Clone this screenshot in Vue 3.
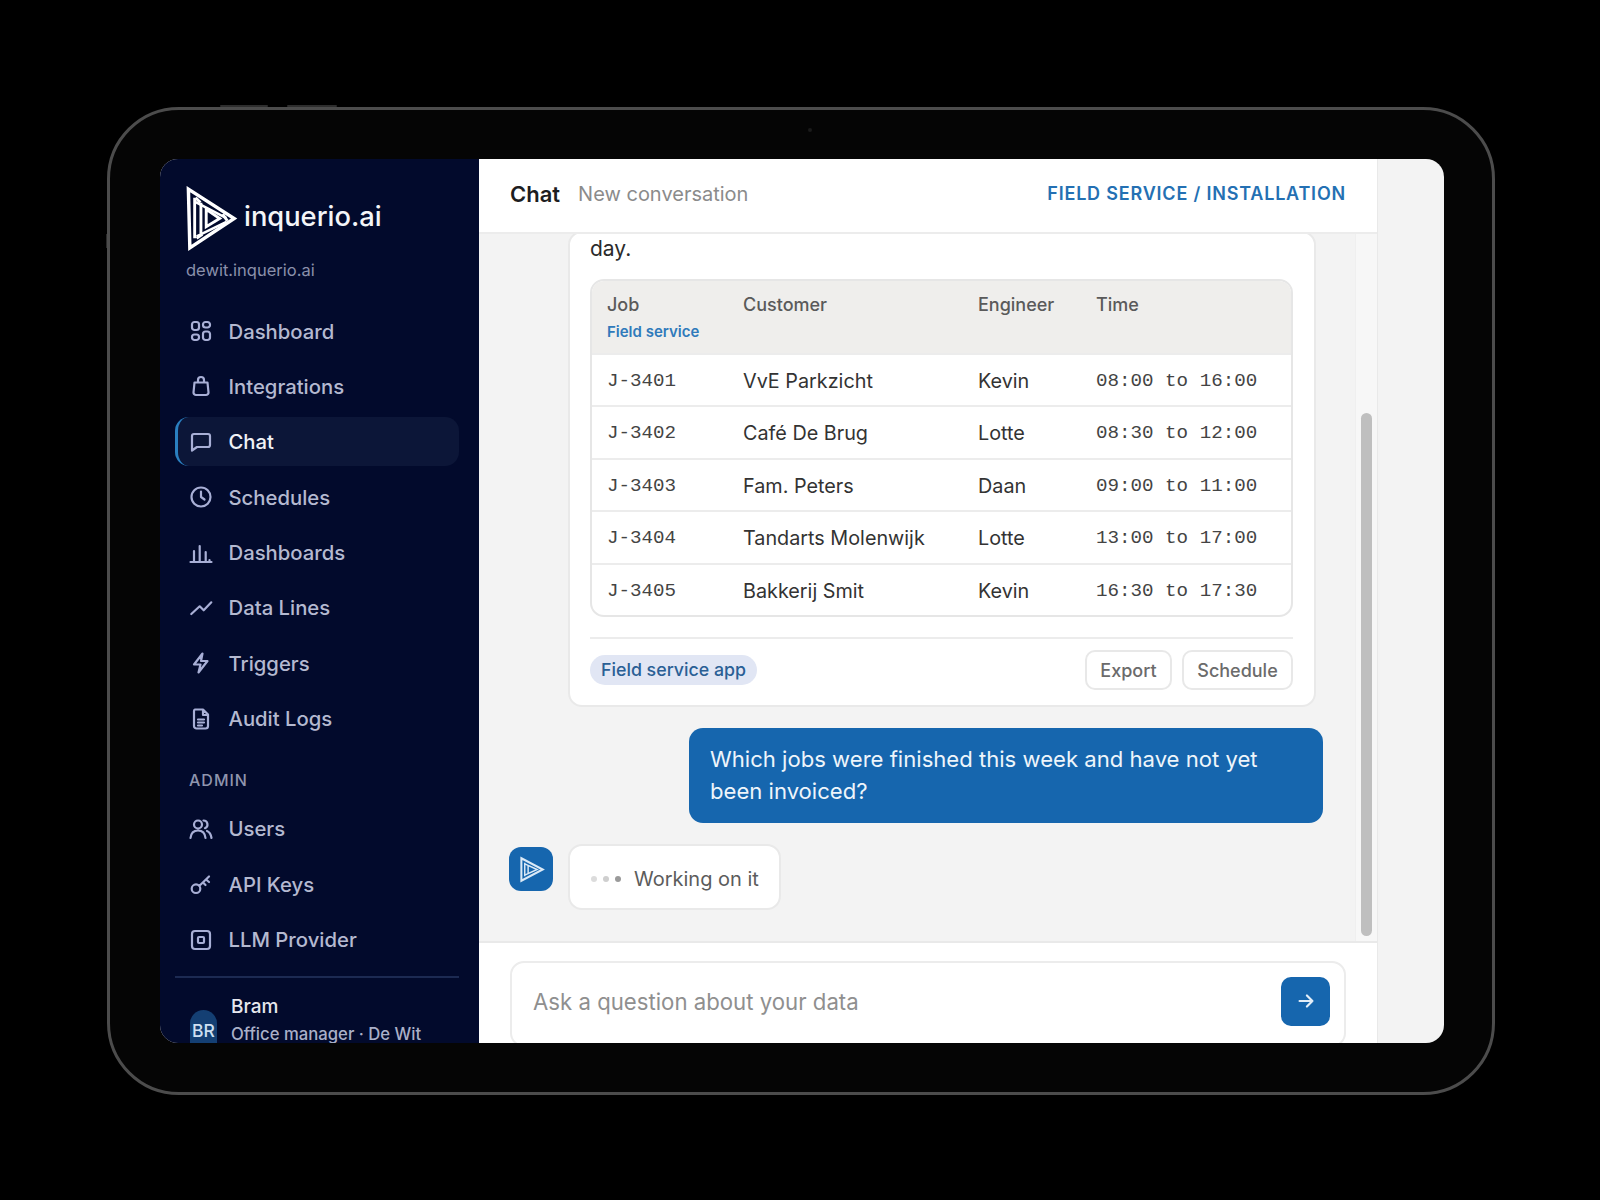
<script setup>
const nav = [
  { label: 'Dashboard', d: 'M5.5 3h2a2.5 2.5 0 0 1 2.5 2.5v3A2.5 2.5 0 0 1 7.500 11h-2A2.500 2.500 0 0 1 3 8.500v-3A2.500 2.500 0 0 1 5.500 3z M16.500 3h2A2.500 2.500 0 0 1 21 5.500v.5a2.500 2.500 0 0 1-2.500 2.500h-2A2.500 2.500 0 0 1 14 6v-.5A2.500 2.500 0 0 1 16.500 3z M5.500 15.500h2A2.500 2.500 0 0 1 10 18v.5A2.500 2.500 0 0 1 7.500 21h-2A2.500 2.500 0 0 1 3 18.500V18a2.500 2.500 0 0 1 2.500-2.500z M16.500 12.500h2A2.500 2.500 0 0 1 21 15v3.500a2.500 2.500 0 0 1-2.500 2.500h-2a2.500 2.500 0 0 1-2.500-2.500V15a2.500 2.500 0 0 1 2.500-2.500z' },
  { label: 'Integrations', d: 'M5.500 8.500h13l1 10a2.500 2.500 0 0 1-2.500 2.500H7a2.500 2.500 0 0 1-2.500-2.500z M9 8.500V6a3 3 0 0 1 6 0v2.500' },
  { label: 'Chat', active: true, d: 'M21 15a2 2 0 0 1-2 2H8l-5 3.500V6a2 2 0 0 1 2-2h14a2 2 0 0 1 2 2z' },
  { label: 'Schedules', d: 'M21.500 12a9.500 9.500 0 1 1-19 0 9.500 9.500 0 0 1 19 0z M12 6.500V12l3.500 2.500' },
  { label: 'Dashboards', d: 'M1.500 21h21 M5 21V10 M10.700 21V5 M16.700 21V11 M20.500 21v-2' },
  { label: 'Data Lines', d: 'M2.300 18l8.400-7.700 4 4L22.300 6.300' },
  { label: 'Triggers', d: 'M13.500 2.500 5 13.500h6.500L9.500 21.500l9-11.500h-6.500z' },
  { label: 'Audit Logs', d: 'M6 2.500h8l5 5V19a2.500 2.500 0 0 1-2.500 2.500h-9A2.500 2.500 0 0 1 5 19V4a1.500 1.500 0 0 1 1-1.500z M14 2.500V8h5 M9 12.500h6 M9 15.500h6 M9 18.500h4' }
]

const admin = [
  { label: 'Users', d: 'M9 11.500a4 4 0 1 0 0-8 4 4 0 0 0 0 8z M1.500 21c.5-5 3.500-7.500 7.500-7.500s7 2.500 7.500 7.500 M14.500 3.500a4 4 0 0 1 1.500 7.700 M18 14c2.500 1 4 3.500 4.500 7' },
  { label: 'API Keys', d: 'M7 21a4.300 4.300 0 1 0 0-8.600 4.300 4.300 0 0 0 0 8.600z M10.200 14 20 4.500 M17 7.500l3 2.500 M14 10.500l2.500 2.500' },
  { label: 'LLM Provider', d: 'M6 3h12a3 3 0 0 1 3 3v12a3 3 0 0 1-3 3H6a3 3 0 0 1-3-3V6a3 3 0 0 1 3-3z M10 9h4a1 1 0 0 1 1 1v4a1 1 0 0 1-1 1h-4a1 1 0 0 1-1-1v-4a1 1 0 0 1 1-1z' }
]

const jobs = [
  { id: 'J-3401', customer: 'VvE Parkzicht', engineer: 'Kevin', time: '08:00 to 16:00' },
  { id: 'J-3402', customer: 'Café De Brug', engineer: 'Lotte', time: '08:30 to 12:00' },
  { id: 'J-3403', customer: 'Fam. Peters', engineer: 'Daan', time: '09:00 to 11:00' },
  { id: 'J-3404', customer: 'Tandarts Molenwijk', engineer: 'Lotte', time: '13:00 to 17:00' },
  { id: 'J-3405', customer: 'Bakkerij Smit', engineer: 'Kevin', time: '16:30 to 17:30' }
]
</script>

<template>
  <div class="page">
    <div class="device">
      <span class="hw-btn hw-one"></span>
      <span class="hw-btn hw-two"></span>
      <span class="hw-side"></span>
      <span class="camera"></span>
      <div class="screen">
        <aside class="sidebar">
          <div class="brand">
            <svg class="logo" viewBox="0 0 54 68" fill="none" stroke="#fff" stroke-linejoin="miter">
              <path d="M2.500 3 50 33.500 4 64z" stroke-width="3.600" />
              <path d="M9 12v42M15.500 17v32" stroke-width="3" />
              <path d="M9 16 42 33M11 52 42 37" stroke-width="2.600" />
              <path d="M21 24 35 33.500 21 42z" stroke-width="3" />
              <path d="M38 29l5 7M17 50l-6 4M15 17l-5-5" stroke-width="3" />
            </svg>
            <span class="brand-name">inquerio.ai</span>
          </div>
          <div class="domain">dewit.inquerio.ai</div>

          <nav class="nav">
            <a v-for="item in nav" :key="item.label" class="nav-item" :class="{ active: item.active }">
              <svg class="nav-icon" viewBox="0 0 24 24" fill="none" stroke="currentColor" stroke-width="2.200" stroke-linecap="round" stroke-linejoin="round"><path :d="item.d" /></svg>
              <span>{{ item.label }}</span>
            </a>
          </nav>

          <div class="nav-label">ADMIN</div>

          <nav class="nav">
            <a v-for="item in admin" :key="item.label" class="nav-item">
              <svg class="nav-icon" viewBox="0 0 24 24" fill="none" stroke="currentColor" stroke-width="2.200" stroke-linecap="round" stroke-linejoin="round"><path :d="item.d" /></svg>
              <span>{{ item.label }}</span>
            </a>
          </nav>

          <div class="user">
            <div class="avatar">BR</div>
            <div>
              <div class="user-name">Bram</div>
              <div class="user-role">Office manager · De Wit</div>
            </div>
          </div>
        </aside>

        <main class="main">
          <header class="topbar">
            <h1>Chat</h1>
            <span class="subtitle">New conversation</span>
            <span class="context">FIELD SERVICE / INSTALLATION</span>
          </header>

          <div class="thread">
            <div class="messages">
              <div class="card">
                <p class="card-text">day.</p>
                <div class="table">
                  <div class="table-head row-grid">
                    <div>Job<div class="head-sub">Field service</div></div>
                    <div>Customer</div>
                    <div>Engineer</div>
                    <div>Time</div>
                  </div>
                  <div v-for="job in jobs" :key="job.id" class="table-row row-grid">
                    <div class="mono">{{ job.id }}</div>
                    <div>{{ job.customer }}</div>
                    <div>{{ job.engineer }}</div>
                    <div class="mono">{{ job.time }}</div>
                  </div>
                </div>
                <div class="card-foot">
                  <span class="chip">Field service app</span>
                  <div class="actions">
                    <button class="btn btn-export">Export</button>
                    <button class="btn btn-schedule">Schedule</button>
                  </div>
                </div>
              </div>

              <div class="user-msg">Which jobs were finished this week and have not yet been invoiced?</div>

              <div class="bot-row">
                <div class="bot-avatar">
                  <svg viewBox="0 0 24 24" fill="none" stroke="#dbe9f6" stroke-width="1.300">
                    <path d="M3 2 22 12 3 22z" stroke-width="1.800" />
                    <path d="M6 6v12M9 8v8M6 7l11 5L6 17" />
                  </svg>
                </div>
                <div class="working">
                  <span class="dots"><i></i><i></i><i></i></span>
                  Working on it
                </div>
              </div>
            </div>
            <div class="scroll-track"><div class="scroll-thumb"></div></div>
          </div>

          <footer class="composer">
            <div class="input-box">
              <span class="placeholder">Ask a question about your data</span>
              <button class="send">
                <svg viewBox="0 0 24 24" fill="none" stroke="#e3eef8" stroke-width="2.400" stroke-linecap="round" stroke-linejoin="round"><path d="M5 12h14M13 6l6 6-6 6" /></svg>
              </button>
            </div>
          </footer>
        </main>
      </div>
    </div>
  </div>
</template>

<style>
body {
  background: #000;
}
</style>

<style scoped>
.page {
  width: 1600px;
  height: 1200px;
  box-sizing: border-box;
  padding: 107px 105px 105px 107px;
  background: #000;
  font-family: Inter, "Noto Sans", sans-serif;
}

.device {
  position: relative;
  box-sizing: border-box;
  width: 1388px;
  height: 988px;
  padding: 49px 48px 49px 50px;
  border: 3px solid #4c4c4c;
  border-radius: 72px;
  background: #050505;
}

.hw-btn {
  position: absolute;
  top: -5px;
  height: 2px;
  background: #2e2e2e;
  border-radius: 2px;
}
.hw-one {
  left: 110px;
  width: 48px;
}
.hw-two {
  left: 177px;
  width: 50px;
}
.hw-side {
  position: absolute;
  left: -4px;
  top: 124px;
  width: 1px;
  height: 14px;
  background: #2a2a2a;
}
.camera {
  position: absolute;
  left: 698px;
  top: 18px;
  width: 4px;
  height: 4px;
  border-radius: 50%;
  background: #1b1b1b;
}

.screen {
  display: flex;
  width: 1284px;
  height: 884px;
  overflow: hidden;
  border-radius: 18px;
  background: #f3f3f3;
}

.sidebar {
  flex: none;
  box-sizing: border-box;
  width: 319px;
  height: 884px;
  padding: 27px 20px 0 15px;
  overflow: hidden;
  background: #020a2c;
  color: #b4b9d0;
}

.brand {
  display: flex;
  align-items: center;
  gap: 6px;
  height: 66px;
  padding-left: 11px;
}
.logo {
  width: 52px;
  height: 66px;
}
.brand-name {
  margin-top: -6px;
  font-size: 27.300px;
  font-weight: 500;
  color: #f4f5f8;
}
.domain {
  height: 20px;
  margin-top: 8px;
  padding-left: 11px;
  font-size: 16.500px;
  line-height: 20px;
  color: #8a90ab;
}

.nav {
  display: flex;
  flex-direction: column;
  gap: 6.4px;
}
.sidebar > .nav:first-of-type {
  margin-top: 26.500px;
}
.nav-item {
  display: flex;
  align-items: center;
  box-sizing: border-box;
  height: 49px;
  padding-left: 14px;
  gap: 15.500px;
  font-size: 20.300px;
  font-weight: 500;
}
.nav-item.active {
  padding-left: 11px;
  border-left: 3px solid #2a7fc0;
  border-radius: 14px;
  background: #0c1638;
  color: #f1f2f6;
}
.nav-icon {
  flex: none;
  width: 24px;
  height: 24px;
  color: #a8afd6;
}
.nav-label {
  height: 22px;
  margin: 25.500px 0 13.500px 14px;
  font-size: 16px;
  line-height: 22px;
  font-weight: 500;
  letter-spacing: 1px;
  color: #8f95ae;
}

.user {
  display: flex;
  gap: 14px;
  margin-top: 11.500px;
  padding: 17px 0 0 15px;
  border-top: 2px solid #1c2a52;
}
.avatar {
  flex: none;
  box-sizing: border-box;
  width: 27px;
  height: 60px;
  margin-top: 15px;
  padding-top: 11px;
  border-radius: 14px;
  background: #143f73;
  font-size: 17.500px;
  line-height: 19px;
  font-weight: 500;
  text-align: center;
  color: #cfe0f2;
}
.user-name {
  font-size: 19px;
  line-height: 24px;
  font-weight: 500;
  color: #e6e7ee;
}
.user-role {
  margin-top: 6px;
  font-size: 16.700px;
  line-height: 18px;
  font-weight: 500;
  color: #aab0c8;
  white-space: nowrap;
}

.main {
  display: flex;
  flex: none;
  flex-direction: column;
  box-sizing: border-box;
  width: 899px;
  height: 884px;
  border-right: 1px solid #e9e9e9;
  background: #fff;
}

.topbar {
  display: flex;
  flex: none;
  align-items: center;
  box-sizing: border-box;
  height: 75px;
  padding: 0 31px 4px;
  border-bottom: 2px solid #ececec;
}
.topbar h1 {
  margin: 0 18px 0 0;
  font-size: 22px;
  font-weight: 600;
  color: #1d1d1f;
}
.subtitle {
  font-size: 20px;
  color: #8b8b8b;
}
.context {
  margin-left: auto;
  font-size: 18px;
  font-weight: 600;
  letter-spacing: 0.800px;
  color: #2470b3;
}

.thread {
  display: flex;
  flex: 1;
  min-height: 0;
  background: #f3f3f3;
  border-bottom: 2px solid #e9e9e9;
}
.messages {
  display: flex;
  flex: 1;
  flex-direction: column;
  justify-content: flex-end;
  gap: 21.500px;
  min-width: 0;
  padding: 0 32px 31px 30px;
  overflow: hidden;
}

.card {
  flex: none;
  box-sizing: border-box;
  width: 748px;
  margin: 0 0 -1px 59px;
  padding: 0 21px 15px 20px;
  border: 2px solid #e9e9e9;
  border-radius: 14px;
  background: #fff;
}
.card-text {
  margin: 0 0 14px;
  font-size: 21px;
  line-height: 32px;
  color: #2b2b2b;
}

.table {
  overflow: hidden;
  border: 2px solid #e6e6e6;
  border-radius: 14px;
}
.row-grid {
  display: grid;
  grid-template-columns: 136px 235px 118px 1fr;
  padding-left: 15px;
}
.table-head {
  box-sizing: border-box;
  height: 72px;
  padding-top: 12px;
  background: #efeeec;
  font-size: 18px;
  line-height: 24px;
  font-weight: 500;
  color: #5a5a5a;
}
.head-sub {
  margin-top: 3px;
  font-size: 15px;
  font-weight: 600;
  color: #2f7abb;
}
.table-row {
  align-items: center;
  box-sizing: border-box;
  height: 52.500px;
  padding-top: 2px;
  border-top: 2px solid #ececec;
  font-size: 19.800px;
  color: #333;
}
.mono {
  font-family: "Liberation Mono", monospace;
  font-size: 19.200px;
  color: #444;
}

.card-foot {
  display: flex;
  align-items: center;
  justify-content: space-between;
  margin-top: 20px;
  padding-top: 11px;
  border-top: 2px solid #ececec;
}
.chip {
  padding: 0 11px;
  border-radius: 15px;
  background: #e1e6f4;
  font-size: 17.800px;
  line-height: 30px;
  font-weight: 500;
  color: #2a5f95;
}
.actions {
  display: flex;
  gap: 10px;
}
.btn {
  box-sizing: border-box;
  height: 40px;
  padding: 0;
  border: 2px solid #e8e8e8;
  border-radius: 10px;
  background: #fff;
  font-family: inherit;
  font-size: 18px;
  font-weight: 500;
  color: #6b6b6b;
}
.btn-export {
  width: 87px;
}
.btn-schedule {
  width: 111px;
}

.user-msg {
  flex: none;
  align-self: flex-end;
  box-sizing: border-box;
  width: 634px;
  padding: 15px 40px 16px 21px;
  border-radius: 14px;
  background: #1666ae;
  font-size: 22.100px;
  line-height: 32px;
  color: #eef5fb;
}

.bot-row {
  display: flex;
  flex: none;
  gap: 15px;
}
.bot-avatar {
  display: flex;
  align-items: center;
  justify-content: center;
  width: 44px;
  height: 44px;
  margin-top: 3px;
  border-radius: 12px;
  background: #1666ae;
}
.bot-avatar svg {
  width: 27px;
  height: 27px;
}
.working {
  display: flex;
  align-items: center;
  box-sizing: border-box;
  width: 213px;
  height: 66px;
  padding: 3px 0 0 21px;
  border: 2px solid #e9e9e9;
  border-radius: 14px;
  background: #fff;
  font-size: 20px;
  color: #5c5c5c;
}
.dots {
  display: flex;
  gap: 6px;
  margin-right: 13px;
}
.dots i {
  width: 6px;
  height: 6px;
  border-radius: 50%;
  background: #dcdcdc;
}
.dots i:nth-child(2) {
  background: #cfcfcf;
}
.dots i:nth-child(3) {
  background: #9a9a9a;
}

.scroll-track {
  display: flex;
  flex: none;
  flex-direction: column;
  justify-content: flex-end;
  box-sizing: border-box;
  width: 22px;
  padding: 0 5px 5px;
  background: #f7f7f7;
  border-left: 1px solid #efefef;
}
.scroll-thumb {
  height: 523px;
  border-radius: 6px;
  background: #bfbfbf;
}

.composer {
  flex: none;
  box-sizing: border-box;
  height: 100px;
  padding: 18px 31px 0;
  overflow: hidden;
}
.input-box {
  display: flex;
  align-items: center;
  justify-content: space-between;
  box-sizing: border-box;
  height: 86px;
  padding: 0 14px 6px 21px;
  border: 2px solid #ececec;
  border-radius: 14px;
}
.placeholder {
  font-size: 22.200px;
  color: #8f8f8f;
}
.send {
  display: flex;
  align-items: center;
  justify-content: center;
  width: 49px;
  height: 49px;
  padding: 0;
  border: none;
  border-radius: 10px;
  background: #1666ae;
}
.send svg {
  width: 22px;
  height: 22px;
}
</style>
